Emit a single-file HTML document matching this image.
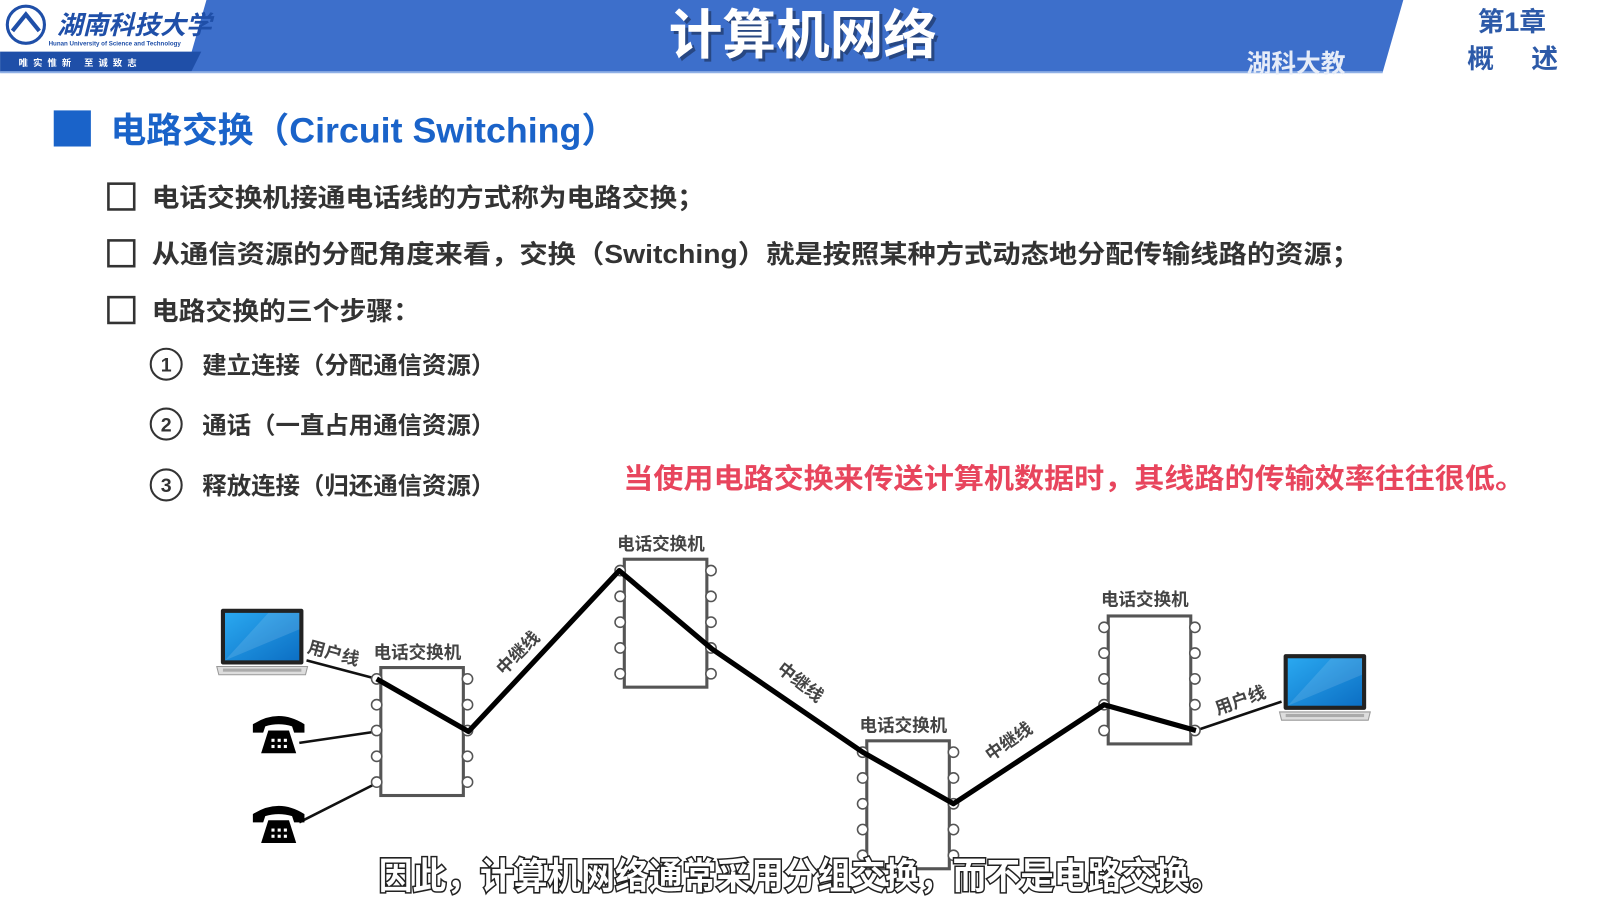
<!DOCTYPE html>
<html><head><meta charset="utf-8"><style>
html,body{margin:0;padding:0;background:#fff;overflow:hidden}
svg{display:block}
text{font-family:"Liberation Sans","Noto Sans CJK SC",sans-serif;font-weight:bold}
</style></head><body>
<svg width="1618" height="909" viewBox="0 0 1568 881" xmlns="http://www.w3.org/2000/svg">
<defs>
<linearGradient id="scr" x1="0" y1="0" x2="1" y2="1"><stop offset="0" stop-color="#2aa8f0"/><stop offset="1" stop-color="#0c6fc4"/></linearGradient>
<g id="phone"><path d="M0 10 Q25 -6 50 10 L50 18 L40 18 L38 12 Q25 8 12 12 L10 18 L0 18 Z" fill="#000"/><path d="M15 16 L35 16 L42 38 L8 38 Z" fill="#000"/><g fill="#fff"><rect x="18" y="24" width="3" height="3"/><rect x="24" y="24" width="3" height="3"/><rect x="30" y="24" width="3" height="3"/><rect x="18" y="30" width="3" height="3"/><rect x="24" y="30" width="3" height="3"/><rect x="30" y="30" width="3" height="3"/></g></g>
<g id="laptop"><rect x="4" y="0" width="80" height="54" rx="2" fill="#222"/><rect x="8" y="4" width="72" height="46" fill="url(#scr)"/><path d="M8 50 L50 4 L80 4 L80 20 Z" fill="#fff" opacity=".12"/><path d="M0 56 L88 56 L86 64 L2 64 Z" fill="#ddd" stroke="#999"/><rect x="6" y="58" width="76" height="3" fill="#aaa"/></g>
<g id="sw"><rect x="0" y="0" width="80" height="124" fill="#fff" stroke="#555" stroke-width="3"/>
<g fill="#fff" stroke="#555" stroke-width="1.5"><circle cx="-4" cy="11" r="5"/><circle cx="-4" cy="36" r="5"/><circle cx="-4" cy="61" r="5"/><circle cx="-4" cy="86" r="5"/><circle cx="-4" cy="111" r="5"/><circle cx="84" cy="11" r="5"/><circle cx="84" cy="36" r="5"/><circle cx="84" cy="61" r="5"/><circle cx="84" cy="86" r="5"/><circle cx="84" cy="111" r="5"/></g></g>
</defs>
<!-- header -->
<rect x="0" y="0" width="1568" height="70" fill="#fff"/>
<polygon points="200,0 1360,0 1340,70 180,70" fill="#3d6fcb"/>
<polygon points="0,50 195,50 185,70 0,70" fill="#1f4fa8"/>
<rect x="0" y="69" width="1340" height="2" fill="#8fb0e6"/>
<circle cx="25" cy="24" r="18" fill="#fff" stroke="#1f4fa8" stroke-width="3"/>
<path d="M12 30 L25 14 L38 30" fill="none" stroke="#1f4fa8" stroke-width="4"/>
<text x="55" y="33" font-size="25" fill="#1f4fa8" font-family="Noto Serif CJK SC,serif" font-style="italic">湖南科技大学</text>
<text x="47" y="44" font-size="6" fill="#1f4fa8" font-weight="normal">Hunan University of Science and Technology</text>
<text x="18" y="64" font-size="9" fill="#fff" letter-spacing="5">唯实惟新  至诚致志</text>
<text x="778" y="52" font-size="52" fill="#000" opacity=".35" text-anchor="middle" transform="translate(3,3)">计算机网络</text>
<text x="778" y="52" font-size="52" fill="#fff" text-anchor="middle">计算机网络</text>
<text x="1208" y="70" font-size="24" fill="#e6ecf8" font-weight="normal">湖科大教</text>
<text x="1432" y="30" font-size="26" fill="#2d5aa8">第1章</text>
<text x="1422" y="66" font-size="26" fill="#2d5aa8">概</text>
<text x="1484" y="66" font-size="26" fill="#2d5aa8">述</text>
<!-- section title -->
<rect x="52" y="107" width="36" height="35" fill="#1a63c9"/>
<text x="107" y="138" font-size="34" fill="#1a63c9" textLength="491" lengthAdjust="spacingAndGlyphs">电路交换（Circuit Switching）</text>
<g fill="none" stroke="#333" stroke-width="2.5"><rect x="105" y="178" width="25" height="25"/><rect x="105" y="233" width="25" height="25"/><rect x="105" y="288" width="25" height="25"/></g>
<g font-size="25" fill="#333">
<text x="147" y="200" textLength="536" lengthAdjust="spacingAndGlyphs">电话交换机接通电话线的方式称为电路交换；</text>
<text x="147" y="255" textLength="1171" lengthAdjust="spacingAndGlyphs">从通信资源的分配角度来看，交换（Switching）就是按照某种方式动态地分配传输线路的资源；</text>
<text x="147" y="310" textLength="260" lengthAdjust="spacingAndGlyphs">电路交换的三个步骤：</text>
</g>
<g fill="none" stroke="#333" stroke-width="2"><circle cx="161" cy="353" r="15"/><circle cx="161" cy="411" r="15"/><circle cx="161" cy="470" r="15"/></g>
<g font-size="19" fill="#333" text-anchor="middle" font-weight="normal"><text x="161" y="360">1</text><text x="161" y="418">2</text><text x="161" y="477">3</text></g>
<g font-size="23" fill="#333">
<text x="196" y="362" textLength="284" lengthAdjust="spacingAndGlyphs">建立连接（分配通信资源）</text>
<text x="196" y="420" textLength="284" lengthAdjust="spacingAndGlyphs">通话（一直占用通信资源）</text>
<text x="196" y="479" textLength="284" lengthAdjust="spacingAndGlyphs">释放连接（归还通信资源）</text>
</g>
<text x="604" y="473" font-size="27" fill="#e8455d" stroke="#fff" stroke-width="3" paint-order="stroke" textLength="874" lengthAdjust="spacingAndGlyphs">当使用电路交换来传送计算机数据时，其线路的传输效率往往很低。</text>
<!-- diagram -->
<g stroke="#111" stroke-width="2.5"><line x1="297" y1="640" x2="365" y2="658"/><line x1="290" y1="720" x2="365" y2="709"/><line x1="290" y1="797" x2="365" y2="759"/><line x1="1159" y1="708" x2="1242" y2="680"/></g>
<use href="#sw" x="369" y="647"/>
<use href="#sw" x="605" y="542"/>
<use href="#sw" x="840" y="718"/>
<use href="#sw" x="1074" y="597"/>
<polyline points="365,658 454,709 600,553 690,629 836,729 924,779 1070,683 1159,708" fill="none" stroke="#000" stroke-width="5" stroke-linejoin="round"/>
<use href="#laptop" x="210" y="590"/>
<use href="#laptop" x="1240" y="634"/>
<use href="#phone" x="245" y="692"/>
<use href="#phone" x="245" y="779"/>
<g font-size="17" fill="#444">
<text x="362" y="638">电话交换机</text>
<text x="598" y="533">电话交换机</text>
<text x="833" y="709">电话交换机</text>
<text x="1067" y="587">电话交换机</text>
<text transform="translate(297,632) rotate(15)">用户线</text>
<text transform="translate(488,655) rotate(-45)">中继线</text>
<text transform="translate(752,650) rotate(38)">中继线</text>
<text transform="translate(960,738) rotate(-35)">中继线</text>
<text transform="translate(1180,693) rotate(-20)">用户线</text>
</g>
<text x="367" y="861" font-size="35" fill="#fff" stroke="#222" stroke-width="3" paint-order="stroke" font-weight="normal" textLength="818" lengthAdjust="spacingAndGlyphs">因此，计算机网络通常采用分组交换，而不是电路交换。</text>
</svg>
</body></html>
